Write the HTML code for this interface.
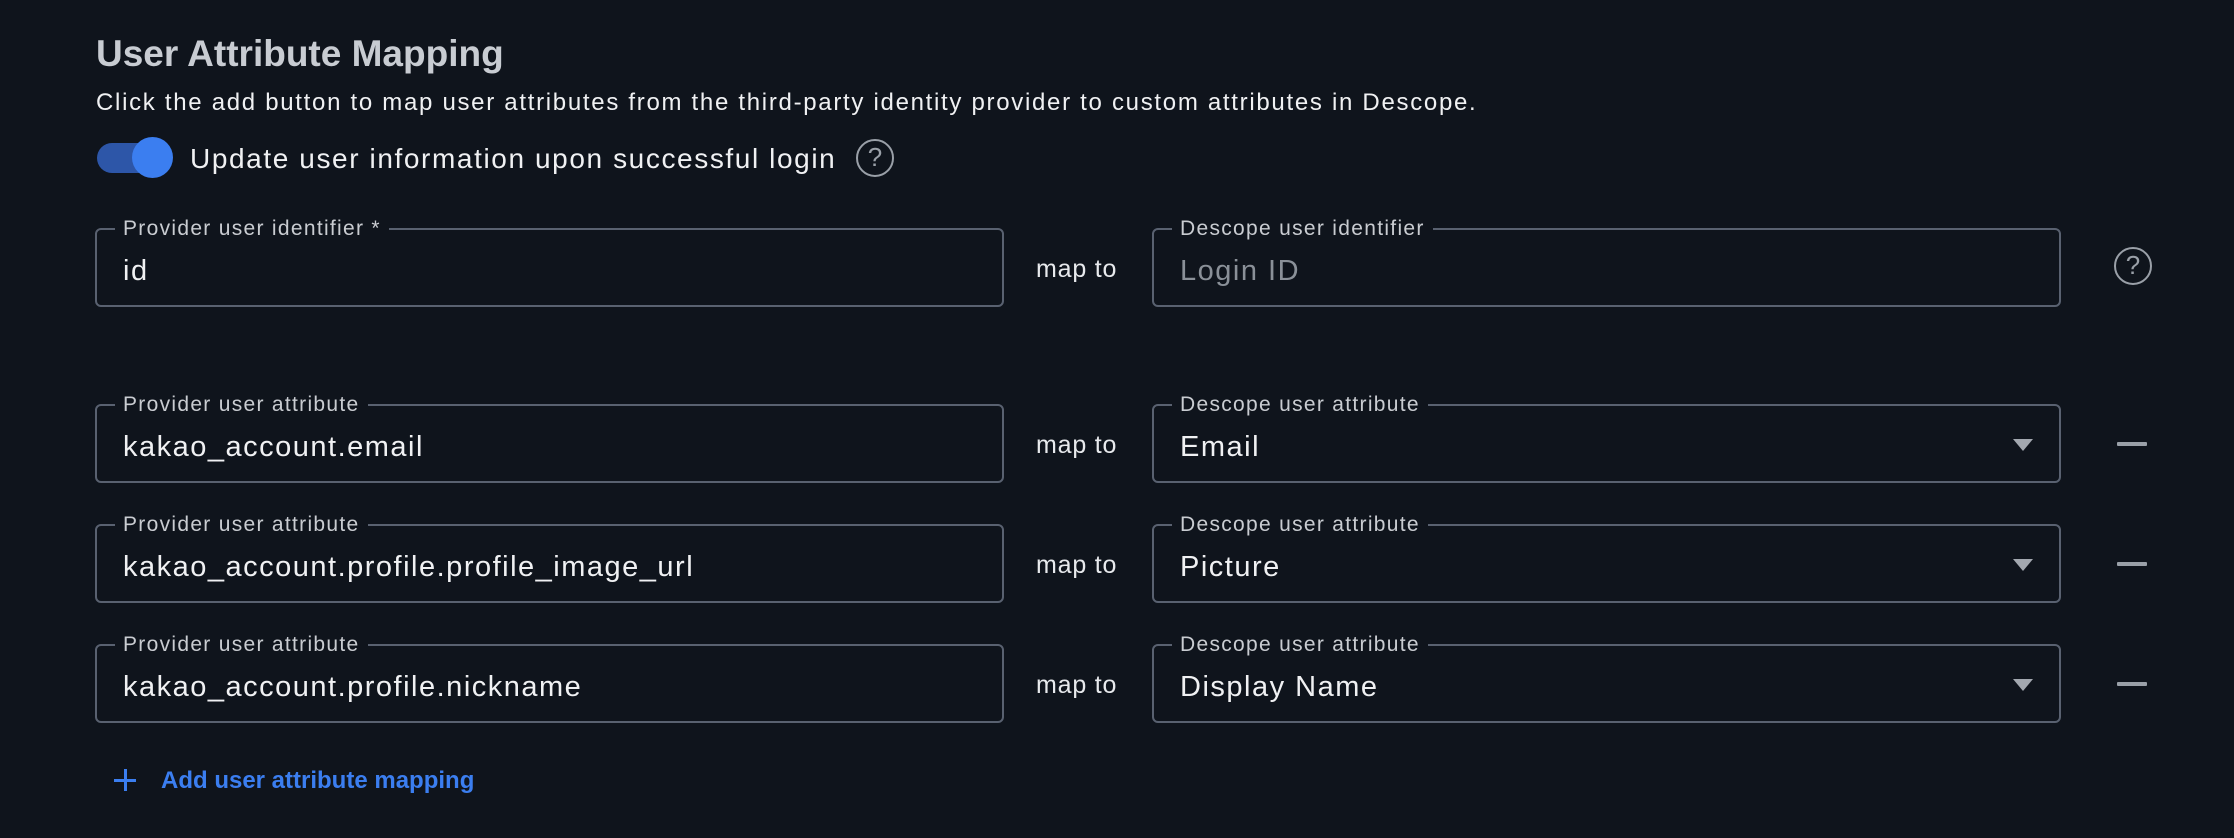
<!DOCTYPE html>
<html><head><meta charset="utf-8"><style>
*{margin:0;padding:0;box-sizing:border-box}
body{width:2234px;height:838px;background:#0f141c;font-family:"Liberation Sans",sans-serif;color:#e8eaed;position:relative;overflow:hidden}
.a{position:absolute;white-space:nowrap}
.f{position:absolute;border:2px solid #596170;border-radius:6px;height:79px}
.lbl{position:absolute;top:-13px;left:18px;background:#0f141c;padding:0 8px;font-size:21px;color:#c9ccd1;line-height:24px;letter-spacing:1.3px}
.val{position:absolute;left:26px;top:24px;font-size:29px;line-height:34px;color:#f0f1f3;letter-spacing:1.5px}
.map{font-size:25px;color:#e8eaed;letter-spacing:0.8px}
.tri{position:absolute;right:26px;top:33px;width:0;height:0;border-left:10px solid transparent;border-right:10px solid transparent;border-top:12px solid #a3a8b0}
.minus{position:absolute;width:30px;height:4px;background:#9aa0a8;left:2117px;border-radius:1px}
.q{position:absolute;width:38px;height:38px;border:2.5px solid #9aa0a8;border-radius:50%;color:#9aa0a8;font-size:26px;text-align:center;line-height:33px}
</style></head><body>
<div class="a" style="left:96px;top:33px;font-size:37px;color:#c8ccd2;font-weight:bold">User Attribute Mapping</div>
<div class="a" style="left:96px;top:89px;font-size:24px;color:#f0f1f3;letter-spacing:1.7px">Click the add button to map user attributes from the third-party identity provider to custom attributes in Descope.</div>
<div class="a" style="left:97px;top:143px;width:72px;height:30px;border-radius:15px;background:#2d56a8"></div>
<div class="a" style="left:132px;top:137px;width:41px;height:41px;border-radius:50%;background:#3b7ef0"></div>
<div class="a" style="left:190px;top:143px;font-size:28px;color:#f0f1f3;letter-spacing:1.6px">Update user information upon successful login</div>
<div class="q" style="left:856px;top:139px">?</div>

<div class="f" style="left:95px;top:228px;width:909px"><div class="lbl">Provider user identifier *</div><div class="val">id</div></div>
<div class="a map" style="left:1036px;top:255px">map to</div>
<div class="f" style="left:1152px;top:228px;width:909px"><div class="lbl">Descope user identifier</div><div class="val" style="color:#8a9098">Login ID</div></div>
<div class="q" style="left:2114px;top:247px">?</div>

<div class="f" style="left:95px;top:404px;width:909px"><div class="lbl">Provider user attribute</div><div class="val">kakao_account.email</div></div>
<div class="a map" style="left:1036px;top:431px">map to</div>
<div class="f" style="left:1152px;top:404px;width:909px"><div class="lbl">Descope user attribute</div><div class="val">Email</div><div class="tri"></div></div>
<div class="minus" style="top:442px"></div>

<div class="f" style="left:95px;top:524px;width:909px"><div class="lbl">Provider user attribute</div><div class="val">kakao_account.profile.profile_image_url</div></div>
<div class="a map" style="left:1036px;top:551px">map to</div>
<div class="f" style="left:1152px;top:524px;width:909px"><div class="lbl">Descope user attribute</div><div class="val">Picture</div><div class="tri"></div></div>
<div class="minus" style="top:562px"></div>

<div class="f" style="left:95px;top:644px;width:909px"><div class="lbl">Provider user attribute</div><div class="val">kakao_account.profile.nickname</div></div>
<div class="a map" style="left:1036px;top:671px">map to</div>
<div class="f" style="left:1152px;top:644px;width:909px"><div class="lbl">Descope user attribute</div><div class="val">Display Name</div><div class="tri"></div></div>
<div class="minus" style="top:682px"></div>

<div class="a" style="left:114px;top:779px;width:22px;height:3px;background:#3b7ef0"></div>
<div class="a" style="left:124px;top:769px;width:3px;height:22px;background:#3b7ef0"></div>
<div class="a" style="left:161px;top:767px;font-size:24px;color:#3b7ef0;font-weight:bold">Add user attribute mapping</div>
</body></html>
